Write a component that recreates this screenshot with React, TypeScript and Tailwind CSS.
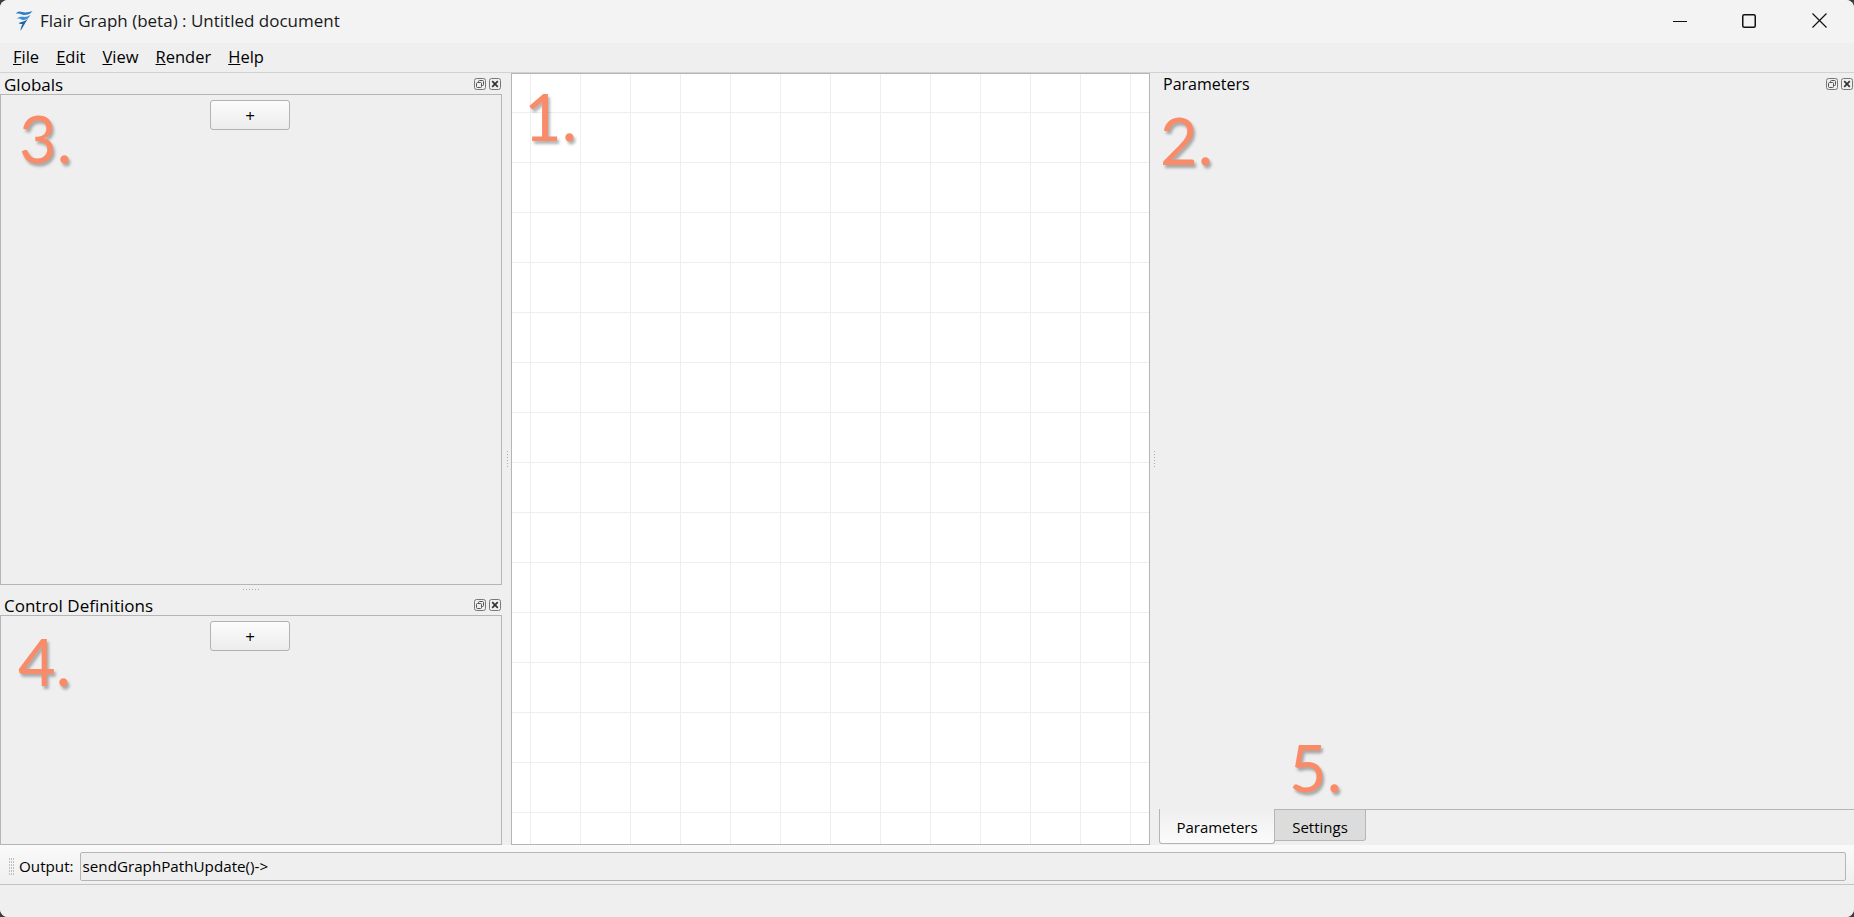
const UI_FONT = "font-['Open_Sans','Liberation_Sans',sans-serif]";

function Logo() {
  return (
    <svg width="21" height="23" viewBox="0 0 20 23" className="shrink-0">
      <path d="M2 5 C4 2 6 2 9 3 C12 4 16 3 19 2 C17 5 14 6 10 6 C7 5 4 4 2 5Z" fill="#2f7cc4" />
      <path d="M3 10 C6 7 9 8 11 8 C13 8 15 7 17 6 C15 10 12 11 9 11 C7 10 5 9 3 10Z" fill="#3c8fd6" />
      <path d="M5 14 C7 13 9 13 11 12 C13 11 14 10 15 9 C12 13 10 17 7 22 C7 19 8 17 9 15 C8 15 6 15 5 14Z" fill="#1f66a8" />
    </svg>
  );
}

function DockButtons() {
  return (
    <div className="flex items-center gap-[3px]">
      <svg width="12" height="12" viewBox="0 0 12 12">
        <rect x="0.5" y="0.5" width="11" height="11" rx="2" fill="none" stroke="#777" />
        <rect x="4.5" y="2.5" width="5" height="5" rx="1" fill="none" stroke="#555" />
        <rect x="2.5" y="4.5" width="5" height="5" rx="1" fill="#efefef" stroke="#555" />
      </svg>
      <svg width="12" height="12" viewBox="0 0 12 12">
        <rect x="0.5" y="0.5" width="11" height="11" rx="2" fill="none" stroke="#777" />
        <path d="M3.2 3.2 L8.8 8.8 M8.8 3.2 L3.2 8.8" stroke="#333" strokeWidth="1.7" />
      </svg>
    </div>
  );
}

function Note({ children, className }: { children: string; className: string }) {
  return (
    <span
      className={`absolute font-['Lato',sans-serif] text-[65px] leading-none text-[#fa8b68] [text-shadow:2px_3px_3px_rgba(0,0,0,0.3)] pointer-events-none ${className}`}
    >
      {children}
    </span>
  );
}

function AddButton() {
  return (
    <button className="ml-[209px] mt-[5px] block w-[80px] h-[30px] rounded-[3px] border border-[#b2b2b2] bg-gradient-to-b from-[#fcfcfc] to-[#ececec] text-[17px] leading-none text-black">
      +
    </button>
  );
}

function Panel({ title, note, noteClass, className }: { title: string; note: string; noteClass: string; className: string }) {
  return (
    <div className={`flex flex-col ${className}`}>
      <div className="flex h-[21px] shrink-0 items-center justify-between pl-[4px] pr-[1px]">
        <span className="pt-[2px] text-[17px] leading-[21px] text-black">{title}</span>
        <DockButtons />
      </div>
      <div className="relative flex-1 border border-[#b5b5b5]">
        <AddButton />
        <Note className={noteClass}>{note}</Note>
      </div>
    </div>
  );
}

function VDots({ className }: { className: string }) {
  return (
    <div className={`flex shrink-0 items-center justify-center ${className}`}>
      <div className="flex flex-col gap-[2px]">
        {[0, 1, 2, 3, 4, 5].map((i) => (
          <span key={i} className="h-[1px] w-[1px] bg-[#aaa]" />
        ))}
      </div>
    </div>
  );
}

export default function App() {
  return (
    <div className={`h-[917px] w-[1854px] overflow-hidden bg-[#3c3c3c] ${UI_FONT}`}>
      <div className="flex h-full flex-col overflow-hidden rounded-[8px] bg-[#efefef]">
        {/* title bar */}
        <div className="flex h-[43px] shrink-0 items-center bg-[#f3f3f3] pb-[2px] pl-[13px]">
          <Logo />
          <span className="ml-[6px] text-[17px] text-[#1a1a1a]">Flair Graph (beta) : Untitled document</span>
          <div className="ml-auto flex items-center">
            <svg width="14" height="14" viewBox="0 0 14 14" className="mr-[55px]">
              <path d="M0 7.5 H14" stroke="#111" strokeWidth="1" />
            </svg>
            <svg width="14" height="14" viewBox="0 0 14 14" className="mr-[56px]">
              <rect x="0.75" y="0.75" width="12.5" height="12.5" rx="1.5" fill="none" stroke="#111" strokeWidth="1.5" />
            </svg>
            <svg width="15" height="15" viewBox="0 0 15 15" className="mr-[27px]">
              <path d="M0.5 0.5 L14.5 14.5 M14.5 0.5 L0.5 14.5" stroke="#111" strokeWidth="1.2" />
            </svg>
          </div>
        </div>

        {/* menu */}
        <div className="flex h-[30px] shrink-0 items-center gap-[17px] border-b border-[#d2d2d2] pl-[13px] text-[16.5px] text-black">
          <span><u>F</u>ile</span>
          <span><u>E</u>dit</span>
          <span><u>V</u>iew</span>
          <span><u>R</u>ender</span>
          <span><u>H</u>elp</span>
        </div>

        {/* docks + canvas */}
        <div className="flex h-[772px] shrink-0">
          <div className="flex w-[502px] shrink-0 flex-col">
            <Panel title="Globals" note="3." noteClass="left-[18px] top-[11px]" className="h-[512px]" />
            <div className="flex h-[9px] items-center justify-center gap-[2px]">
              {[0, 1, 2, 3, 4, 5].map((i) => (
                <span key={i} className="h-[1px] w-[1px] bg-[#aaa]" />
              ))}
            </div>
            <Panel title="Control Definitions" note="4." noteClass="left-[17px] top-[13px]" className="flex-1" />
          </div>

          <VDots className="w-[9px] pl-[1px]" />

          <div className="relative w-[639px] shrink-0 border border-[#b5b5b5] bg-white bg-[linear-gradient(#eeeeee_1px,transparent_1px),linear-gradient(90deg,#eeeeee_1px,transparent_1px)] bg-[size:50px_50px] bg-[position:18px_38px]">
            <Note className="left-[12px] top-[10px]">1.</Note>
          </div>

          <VDots className="w-[8px]" />

          <div className="relative flex min-w-0 flex-1 flex-col">
            <div className="flex h-[21px] shrink-0 items-center justify-between pl-[5px] pr-[1px]">
              <span className="pt-[2px] text-[16px] leading-[21px] text-black">Parameters</span>
              <DockButtons />
            </div>
            <Note className="left-[2px] top-[35px]">2.</Note>
            <div className="relative flex-1">
              <Note className="left-[131px] top-[641px]">5.</Note>
            </div>
            <div className="flex h-[36px] shrink-0 items-start pl-[1px]">
              <div className="h-[35px] w-[116px] rounded-b-[3px] border border-t-0 border-[#b5b5b5] bg-gradient-to-b from-[#efefef] to-[#fbfbfb] pt-[8px] text-center text-[15px] leading-[21px] text-black">
                Parameters
              </div>
              <div className="h-[32px] w-[91px] rounded-br-[3px] border border-l-0 border-[#b5b5b5] bg-[#dcdcdc] pt-[7px] text-center text-[15px] leading-[20px] text-black">
                Settings
              </div>
              <div className="h-[1px] flex-1 bg-[#b5b5b5]" />
            </div>
          </div>
        </div>

        {/* output toolbar */}
        <div className="flex h-[40px] shrink-0 items-center border-b border-[#c4c4c4] bg-gradient-to-b from-[#fafafa] to-[#efefef] pl-[9px] pr-[8px] pt-[3px]">
          <div className="flex flex-col gap-[1px]">
            {[0, 1, 2, 3, 4, 5].map((i) => (
              <div key={i} className="flex gap-[1px]">
                <span className="h-[2px] w-[1px] bg-[#c0c0c0]" />
                <span className="h-[2px] w-[1px] bg-[#c0c0c0]" />
                <span className="h-[2px] w-[1px] bg-[#c0c0c0]" />
              </div>
            ))}
          </div>
          <span className="ml-[5px] text-[15.2px] text-black">Output:</span>
          <div className="ml-[6px] flex h-[29px] flex-1 items-center rounded-[2px] border border-[#b5b5b5] bg-[#efefef] pl-[2px] text-[15.2px] text-black">
            sendGraphPathUpdate()-&gt;
          </div>
        </div>

        {/* status bar */}
        <div className="flex-1 bg-[#efefef]" />
      </div>
    </div>
  );
}
